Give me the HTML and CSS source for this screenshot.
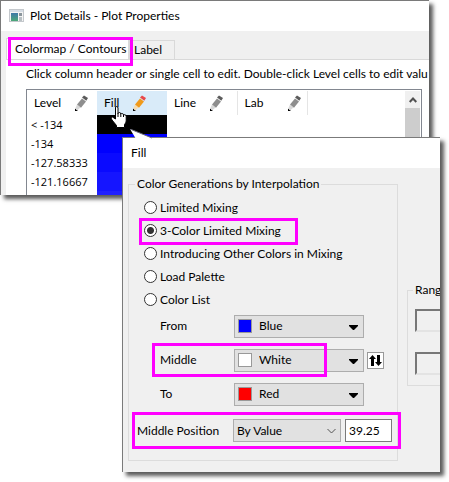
FILE: index.html
```html
<!DOCTYPE html>
<html lang="en">
  <head>
    <meta charset="UTF-8" />
    <meta name="viewport" content="width=device-width, initial-scale=1.0" />
    <title>Plot Details - Plot Properties</title>
    <link rel="stylesheet" href="styles.css">
  </head>
  <body>
    <svg class="defs" width="0" height="0" aria-hidden="true">
      <symbol id="pencil" viewBox="0 0 14 17">
        <path class="tip" d="M1 16V13.500L4 16z" />
        <path class="wood" d="M1.500 13L3 9.500L6.500 12.500L3 15.500z" />
        <path class="wand" d="M3 9.500L8 3.500L12 6.500L7 12.800z" />
        <path class="rubber" d="M8 2.500L10 0.500L14 3L12.300 5.800z" />
      </symbol>
      <symbol id="arrow" viewBox="0 0 9 5">
        <path d="M0 0h9v1L5 5H4L0 1z" />
      </symbol>
    </svg>

    <section class="window plot">
      <header class="titlebar">
        <svg class="app-icon" width="15" height="14" viewBox="0 0 15 14">
          <defs>
            <linearGradient id="screen" x1="0" y1="0" x2="0" y2="1">
              <stop offset="0" stop-color="#3f78a8" />
              <stop offset="1" stop-color="#4ba878" />
            </linearGradient>
          </defs>
          <rect x="0.500" y="0.500" width="14" height="12" fill="#f4f4f4" stroke="#c4c8cc" />
          <rect x="1" y="1" width="13" height="2" fill="#d5dce4" />
          <rect x="2" y="4" width="7" height="8" fill="url(#screen)" />
          <rect x="10" y="4" width="3" height="3" fill="#8b959c" />
          <rect x="10" y="8" width="3" height="4" fill="#b9c0c4" />
        </svg>
        <h1>Plot Details - Plot Properties</h1>
      </header>
      <div class="plot-body">
        <nav class="tabs">
          <button class="tab active marked">Colormap / Contours</button>
          <button class="tab">Label</button>
        </nav>
        <div class="panel">
          <p class="hint">Click column header or single cell to edit. Double-click Level cells to edit valu</p>
          <div class="grid">
            <table>
              <thead>
                <tr>
                  <th><div class="head">Level <svg class="pencil"><use href="#pencil" /></svg></div></th>
                  <th class="hot">
                    <div class="head">Fill <svg class="pencil"><use href="#pencil" /></svg></div>
                    <svg class="hand" width="16" height="22" viewBox="0 0 16 22">
                      <path
                        d="M4.500 13V2Q4.500 .500 5.500 .500Q7 .500 7 2V7.500Q7.300 6.500 8.500 6.500Q9.700 6.500 9.800 8Q10.300 7.300 11.300 7.500Q12.500 7.700 12.500 9Q13 8.500 14 8.800Q15.200 9 15.200 10.500V15Q15 17 13.500 18.500V21.500H5.500V19.500L1 14Q0 12.500 .500 11.500Q1.500 10.500 3 12z"
                        fill="#fff"
                        stroke="#000"
                      />
                      <path d="M7 7v4M9.800 8v3M12.500 9v2" stroke="#000" />
                    </svg>
                  </th>
                  <th class="ruled"><div class="head">Line <svg class="pencil"><use href="#pencil" /></svg></div></th>
                  <th class="ruled"><div class="head spread">Lab <svg class="pencil"><use href="#pencil" /></svg></div></th>
                </tr>
              </thead>
              <tbody>
                <tr><td>&lt; -134</td><td class="below"></td><td></td><td></td></tr>
                <tr><td>-134</td><td class="step1"></td><td></td><td></td></tr>
                <tr><td>-127.58333</td><td class="step2"></td><td></td><td></td></tr>
                <tr><td>-121.16667</td><td class="step3"></td><td></td><td></td></tr>
                <tr><td></td><td class="step4"></td><td></td><td></td></tr>
              </tbody>
            </table>
            <div class="scrollbar">
              <button class="scroll-up" aria-label="Scroll up">
                <svg width="8" height="6" viewBox="0 0 8 6">
                  <path d="M.700 5L4 1.500L7.300 5" fill="none" stroke="#505050" stroke-width="2" />
                </svg>
              </button>
              <div class="thumb"></div>
            </div>
          </div>
        </div>
      </div>
    </section>

    <section class="window dialog">
      <svg class="callout" width="24" height="10" viewBox="0 0 24 10">
        <path d="M0 0L22 9V10H6z" fill="#fff" />
        <path d="M0 0L22 9" fill="none" stroke="#667" />
      </svg>
      <header class="titlebar"><h2>Fill</h2></header>
      <form class="dialog-body">
        <fieldset class="mixing">
          <legend>Color Generations by Interpolation</legend>
          <div class="choices">
            <label class="radio"><input type="radio" name="mix" />Limited Mixing</label>
            <label class="radio marked"><input type="radio" name="mix" checked />3-Color Limited Mixing</label>
            <label class="radio"><input type="radio" name="mix" />Introducing Other Colors in Mixing</label>
            <label class="radio"><input type="radio" name="mix" />Load Palette</label>
            <label class="radio"><input type="radio" name="mix" />Color List</label>
          </div>

          <div class="row">
            <label for="from">From</label>
            <div class="picker">
              <select id="from"><option>Blue</option></select>
              <span class="swatch blue"></span>
              <svg class="arrow"><use href="#arrow" /></svg>
            </div>
          </div>
          <div class="row marked">
            <label for="middle">Middle</label>
            <div class="picker">
              <select id="middle"><option>White</option></select>
              <span class="swatch white"></span>
              <svg class="arrow"><use href="#arrow" /></svg>
            </div>
            <button type="button" class="swap" aria-label="Swap colors">
              <svg width="13" height="11" viewBox="0 0 13 11">
                <path d="M3.500 0L7 4H5V11H2V4H0z" />
                <path d="M9.500 11L13 7H11V0H8V7H6z" />
              </svg>
            </button>
          </div>
          <div class="row">
            <label for="to">To</label>
            <div class="picker">
              <select id="to"><option>Red</option></select>
              <span class="swatch red"></span>
              <svg class="arrow"><use href="#arrow" /></svg>
            </div>
          </div>
          <div class="position marked">
            <label for="position">Middle Position</label>
            <div class="picker">
              <select id="position"><option>By Value</option></select>
              <svg class="chevron" viewBox="0 0 9 6">
                <path d="M.500 1L4.500 5L8.500 1" fill="none" stroke="#555" />
              </svg>
            </div>
            <input type="text" value="39.25" aria-label="Middle value" />
          </div>
        </fieldset>
        <fieldset class="range">
          <legend>Rang</legend>
          <input type="text" aria-label="Range from" disabled />
          <input type="text" aria-label="Range to" disabled />
        </fieldset>
      </form>
    </section>
  </body>
</html>
```
FILE: styles.css
```css
* {
  box-sizing: border-box;
  margin: 0;
  padding: 0;
}

body {
  background: #fff;
  color: #000;
  font-family: Lato, "Open Sans", sans-serif;
  font-size: 12px;
  line-height: 18px;
}

button,
input,
select {
  font: inherit;
  color: inherit;
}

h1,
h2 {
  font-size: 12px;
  font-weight: 400;
}

.defs {
  position: absolute;
}

.window {
  background: #f0f0f0;
  border-top: 1px solid #7a7a7a;
  border-left: 1px solid #7a7a7a;
  box-shadow: 4px 4px 4px rgba(0, 0, 0, 0.65);
}

.titlebar {
  display: flex;
  align-items: center;
  gap: 6px;
  height: 30px;
  padding: 0 8px;
  background: #fff;
}

/* magenta frame drawn over whatever it marks */
.marked {
  position: relative;
}

.marked::after {
  content: "";
  position: absolute;
  inset: 0;
  border: 3px solid #ff00ff;
  pointer-events: none;
}

/* plot details window */

.plot {
  margin-right: 20px;
}

.plot-body {
  padding: 7px 0 0 5px;
}

.tabs {
  display: flex;
  align-items: flex-end;
}

.tab {
  height: 19px;
  padding: 0 12px 0 4px;
  border: 1px solid #d9d9d9;
  border-bottom: none;
  background: #f0f0f0;
  line-height: 18px;
  text-align: left;
  white-space: nowrap;
}

.tab.active {
  width: 123px;
  height: 21px;
  padding: 0 8px;
  background: #fff;
}

.tab.marked::after {
  inset: -2px -5px -7px 1px;
}

.panel {
  padding: 5px 0 0 20px;
  border-top: 1px solid #d9d9d9;
  background: #fff;
}

.hint {
  overflow: hidden;
  white-space: nowrap;
}

.grid {
  display: flex;
  justify-content: space-between;
  height: 106px;
  margin: 6px 7px 0 0;
  padding: 1px 1px 0 0;
  overflow: hidden;
  border: 1px solid #828790;
  border-bottom: none;
}

table {
  border-collapse: collapse;
}

th {
  position: relative;
  width: 70px;
  height: 24px;
  font-weight: 400;
}

th.ruled {
  border-right: 1px solid #e5e5e5;
}

.hot {
  background: #d9ebf9;
}

.head {
  display: flex;
  align-items: center;
  gap: 13px;
  padding: 0 6px 0 7px;
}

.head.spread {
  justify-content: space-between;
}

.pencil {
  width: 14px;
  height: 17px;
}

.pencil {
  --wand: #8e8e8e;
  --rubber: #5c5c5c;
  --wood: #d8d8d8;
}

.hot .pencil {
  --wand: #f09a1a;
  --rubber: #e8484a;
  --wood: #f8dcae;
}

.wand {
  fill: var(--wand);
}

.rubber {
  fill: var(--rubber);
}

.wood {
  fill: var(--wood);
}

.hand {
  position: absolute;
  left: 14px;
  top: 15px;
  z-index: 1;
}

td {
  height: 19px;
  padding-left: 4px;
  font-family: "Open Sans", sans-serif;
  font-size: 11px;
  white-space: nowrap;
}

.below {
  background: #000;
}

.step1 {
  background: #0000ff;
}

.step2 {
  background: #0a0aff;
}

.step3 {
  background: #1515ff;
}

.step4 {
  background: #2020ff;
}

.scrollbar {
  width: 15px;
  background: #f0f0f0;
}

.scroll-up {
  display: flex;
  align-items: center;
  justify-content: center;
  width: 15px;
  height: 17px;
  border: none;
  background: #f0f0f0;
}

.thumb {
  height: 88px;
  background: #cdcdcd;
}

/* fill dialog, overlaps the plot window */

.dialog {
  position: relative;
  z-index: 2;
  margin: -58px 9px 9px 122px;
}

.callout {
  position: absolute;
  left: 7px;
  top: -9px;
}

.dialog-body {
  display: flex;
  gap: 9px;
  padding: 7px 0 11px 5px;
  overflow: hidden;
}

fieldset {
  border: 1px solid #dcdcdc;
}

legend {
  margin-left: 6px;
  padding: 0 2px;
}

.mixing {
  flex: none;
  width: 270px;
  padding-bottom: 11px;
}

.choices {
  padding-top: 3px;
}

.radio {
  display: flex;
  align-items: center;
  gap: 3px;
  height: 23px;
  margin-left: 15px;
  white-space: nowrap;
}

.radio input {
  appearance: none;
  width: 13px;
  height: 13px;
  border: 1px solid #333;
  border-radius: 50%;
  background: #fff;
}

.radio input:checked {
  background: radial-gradient(#333 0 3px, #fff 4px);
}

.radio.marked::after {
  inset: -1px 99px -3px -5px;
}

.row {
  display: flex;
  align-items: center;
  height: 34px;
  padding-left: 31px;
}

.choices + .row {
  margin-top: -2px;
}

.row label {
  width: 74px;
}

.row.marked::after {
  inset: 0 70px 0 23px;
}

.picker {
  position: relative;
  width: 130px;
  height: 23px;
}

.picker select {
  appearance: none;
  width: 100%;
  height: 100%;
  padding-left: 24px;
  border: 1px solid #adadad;
  border-radius: 0;
  background: #e1e1e1;
}

.swatch {
  position: absolute;
  left: 4px;
  top: 4px;
  width: 14px;
  height: 14px;
  border: 1px solid #999;
}

.blue {
  background: #0000ff;
}

.white {
  background: #fff;
}

.red {
  background: #ff0000;
}

.arrow,
.chevron {
  position: absolute;
  right: 6px;
  top: 10px;
  width: 9px;
  height: 5px;
  pointer-events: none;
}

.chevron {
  right: 5px;
  top: 9px;
  height: 6px;
}

.swap {
  display: flex;
  align-items: center;
  justify-content: center;
  width: 17px;
  height: 17px;
  margin-left: 3px;
  border: 1px solid #999;
  background: #fff;
}

.position {
  display: flex;
  align-items: center;
  height: 37px;
  margin: 1px -4px 0 3px;
  padding-left: 5px;
}

.position label {
  width: 96px;
  white-space: nowrap;
}

.position .picker {
  width: 108px;
}

.position select {
  padding-left: 3px;
}

.position input {
  width: 47px;
  height: 23px;
  margin-left: 4px;
  padding-left: 3px;
  border: 1px solid #7a7a7a;
  background: #fff;
}

.range {
  flex: none;
  align-self: flex-start;
  width: 120px;
  margin-top: 106px;
  padding-bottom: 10px;
}

.range legend {
  margin-left: 5px;
}

.range input {
  display: block;
  width: 100px;
  height: 23px;
  margin: 10px 0 20px 7px;
  border: 2px solid #e3e3e3;
  border-top-color: #777;
  border-left-color: #777;
  background: #f0f0f0;
}

.range input:last-child {
  margin-bottom: 0;
}
```
